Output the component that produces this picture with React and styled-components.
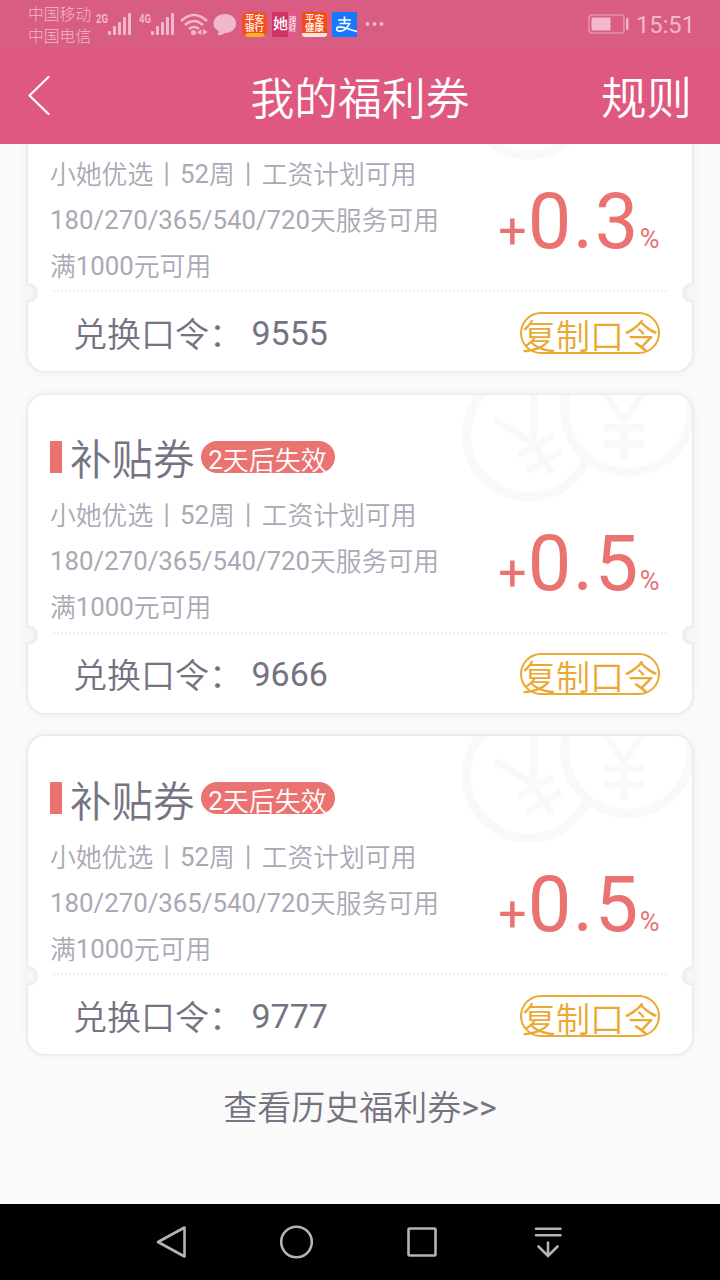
import React from "react";
import styled, { createGlobalStyle } from "styled-components";

const GlobalStyle = createGlobalStyle`
    * {
        box-sizing: border-box;
    }
    body {
        margin: 0;
        background: #fafafa;
        font-family: Roboto, "Noto Sans CJK SC", sans-serif;
        font-weight: 350;
    }
    `;

const Screen = styled.div`
    width: 720px;
    height: 1280px;
    display: flex;
    flex-direction: column;
    overflow: hidden;
    background: #fafafa;
    `;

const StatusBar = styled.div`
    height: 48px;
    flex: none;
    display: flex;
    align-items: center;
    padding: 0 25px 0 28px;
    background: #d95d82;
    color: #f1b8cb;
    `;

const Carriers = styled.div`
    width: 67px;
    padding-top: 3px;
    font-size: 15.8px;
    line-height: 21.5px;
    font-weight: 300;
    white-space: nowrap;
    `;

const StatusIcons = styled.svg`
    display: block;
    flex: none;
    `;

const AppIcons = styled.div`
    display: flex;
    gap: 5px;
    margin-left: 5px;
    `;

const AppIcon = styled.div`
    width: 25px;
    height: 25px;
    display: flex;
    flex-direction: column;
    align-items: center;
    overflow: hidden;
    border-radius: ${(props) => props.$radius || 0}px;
    background: ${(props) => props.$bg};
    color: #fff;
    font-weight: 500;
    font-size: 9.5px;
    line-height: 9px;
    padding-top: 2px;
    white-space: nowrap;
    `;

const IconStrip = styled.div`
    width: ${(props) => props.$width}px;
    height: 4px;
    margin-top: auto;
    border-radius: ${(props) => props.$round || 0};
    background: ${(props) => props.$bg};
    `;

const SheIcon = styled.div`
    width: 25px;
    height: 25px;
    display: flex;
    border-radius: 1px;
    overflow: hidden;
    background: #d03263;
    color: #fff;
    `;

const SheMain = styled.div`
    width: 16px;
    font-size: 15px;
    font-weight: 500;
    line-height: 24px;
    padding-left: 1px;
    `;

const SheSide = styled.div`
    width: 9px;
    padding-top: 5px;
    background: #e25a87;
    font-size: 7.5px;
    line-height: 8px;
    font-weight: 400;
    text-align: center;
    `;

const Clock = styled.div`
    margin-left: 7px;
    font-size: 23.7px;
    line-height: 48px;
    padding-top: 2px;
    font-weight: 400;
    `;

const Spacer = styled.div`
    flex: 1;
    `;

const Header = styled.div`
    height: 96px;
    flex: none;
    display: grid;
    grid-template-columns: 150px 1fr 150px;
    align-items: center;
    background: #df5880;
    color: #fff;
    `;

const Back = styled.svg`
    display: block;
    margin-left: 27px;
    `;

const Title = styled.div`
    font-size: 43.8px;
    line-height: 64px;
    padding-top: 8px;
    text-align: center;
    `;

const Rules = styled.div`
    font-size: 45.5px;
    line-height: 64px;
    padding: 8px 28px 0 0;
    text-align: right;
    `;

const Content = styled.div`
    flex: 1;
    min-height: 0;
    overflow: hidden;
    `;

const List = styled.div`
    margin-top: -91px;
    padding: 0 28px;
    display: flex;
    flex-direction: column;
    gap: 23.5px;
    `;

const Card = styled.div`
    position: relative;
    height: 318px;
    padding: 37px 22px 0;
    border-radius: 17px;
    background: #fff;
    box-shadow: 0 0 3px 1px #e4e4e4, 0 0 9px 1px #f1f1f1;
    `;

const Coins = styled.svg`
    position: absolute;
    top: 0;
    right: 0;
    border-top-right-radius: 17px;
    `;

const Notch = styled.div`
    position: absolute;
    top: 230px;
    ${(props) => props.$side}: -2px;
    width: 12px;
    height: 20px;
    border-radius: ${(props) => (props.$side === "left" ? "0 10px 10px 0" : "10px 0 0 10px")};
    background: radial-gradient(
        circle at ${(props) => (props.$side === "left" ? "1px" : "11px")} 10px,
        #f7f7f7 5px,
        #ececec 10px
    );
    `;

const Heading = styled.div`
    position: relative;
    height: 56px;
    display: flex;
    align-items: center;
    color: #757382;
    visibility: ${(props) => (props.$hidden ? "hidden" : "visible")};
    `;

const Bar = styled.div`
    width: 12px;
    height: 32px;
    margin: 0 8px 6px 0;
    background: #ea7372;
    `;

const Name = styled.div`
    padding-top: 3px;
    font-size: 41.5px;
    line-height: 56px;
    `;

const Expiry = styled.div`
    width: 134px;
    height: 32px;
    margin: 0 0 6px 6px;
    padding-top: 4px;
    border-radius: 16px;
    background: #ea7372;
    color: #fff;
    font-size: 26px;
    line-height: 32px;
    text-align: center;
    white-space: nowrap;
    `;

const Middle = styled.div`
    position: relative;
    display: flex;
    justify-content: space-between;
    height: 144px;
    `;

const Desc = styled.div`
    padding-top: 5.5px;
    color: #aaa8b5;
    font-size: 25.8px;
    line-height: 46px;
    white-space: nowrap;
    `;

const Num = styled.span`
    font-weight: 400;
    line-height: 1;
    vertical-align: 1px;
    `;

const Sep = styled.span`
    margin: 0 0.5px;
    `;

const Rate = styled.div`
    display: flex;
    align-items: baseline;
    padding: 30px 10.5px 0 0;
    color: #ea7372;
    font-weight: 400;
    line-height: 92px;
    `;

const Plus = styled.span`
    font-size: 50px;
    `;

const Amount = styled.span`
    margin-left: 1px;
    font-size: 77.5px;
    letter-spacing: 1.5px;
    `;

const Percent = styled.span`
    font-size: 27px;
    `;

const Divider = styled.div`
    height: 2px;
    margin: 0 3px;
    background: repeating-linear-gradient(90deg, #eeeeee 0 2px, #fff 2px 4px);
    `;

const CodeRow = styled.div`
    display: flex;
    align-items: flex-start;
    justify-content: space-between;
    padding: 19.5px 10px 0 23px;
    color: #757382;
    font-size: 34px;
    line-height: 42px;
    `;

const Label = styled.div`
    padding-top: 2px;
    `;

const Code = styled.span`
    font-weight: 400;
    line-height: 1;
    vertical-align: 2px;
    white-space: pre;
    `;

const CopyButton = styled.button`
    width: 140px;
    height: 42px;
    padding: 8px 0 0;
    display: flex;
    align-items: center;
    justify-content: center;
    border: 2px solid #eba833;
    border-radius: 21px;
    background: transparent;
    color: #eba833;
    font: inherit;
    line-height: 42px;
    white-space: nowrap;
    `;

const History = styled.div`
    padding-top: 29.5px;
    color: #757382;
    font-size: 34px;
    line-height: 48px;
    text-align: center;
    `;

const NavBar = styled.div`
    height: 76px;
    flex: none;
    display: flex;
    align-items: center;
    justify-content: space-between;
    padding: 0 154px 0 152px;
    background: #000;
    `;

const coupons = [
    { rate: "0.3", code: "9555", scrolled: true },
    { rate: "0.5", code: "9666" },
    { rate: "0.5", code: "9777" },
];

const Coupon = ({ rate, code, scrolled }) => {
    return (
        <Card>
            <Coins width="232" height="110" viewBox="0 0 232 110" fill="none" stroke="#f9f9f9" strokeWidth="9">
                <circle cx="69" cy="39.5" r="62.5" />
                <path d="M35 25L73 48L74 -4M73 48L92 78M58 60.500L93 41M67 76L101 56" strokeWidth="7" />
                <circle cx="168" cy="14" r="63.500" fill="#fff" />
                <path d="M144 -5L164 27L184 -5M164 22V64M144 32.500H184M144 49H184" strokeWidth="7" />
            </Coins>
            <Notch $side="left" />
            <Notch $side="right" />
            <Heading $hidden={scrolled}>
                <Bar />
                <Name>补贴券</Name>
                <Expiry>
                    <Num>2</Num>天后失效
                </Expiry>
            </Heading>
            <Middle>
                <Desc>
                    <div>
                        小她优选<Sep>丨</Sep><Num>52</Num>周<Sep>丨</Sep>工资计划可用
                    </div>
                    <div>
                        <Num>180/270/365/540/720</Num>天服务可用
                    </div>
                    <div>
                        满<Num>1000</Num>元可用
                    </div>
                </Desc>
                <Rate>
                    <Plus>+</Plus>
                    <Amount>{rate}</Amount>
                    <Percent>%</Percent>
                </Rate>
            </Middle>
            <Divider />
            <CodeRow>
                <Label>
                    兑换口令：<Code> {code}</Code>
                </Label>
                <CopyButton>复制口令</CopyButton>
            </CodeRow>
        </Card>
    );
};

const Signal = ({ x, label }) => {
    return (
        <g transform={`translate(${x} 0)`}>
            <text x="0" y="23" fontSize="13" fontWeight="700" textLength="12" lengthAdjust="spacingAndGlyphs">
                {label}
            </text>
            <rect x="12" y="31" width="3" height="4" rx="1" />
            <rect x="17" y="26" width="3" height="9" rx="1" />
            <rect x="22" y="22" width="3" height="13" rx="1" />
            <rect x="27" y="17" width="3" height="18" rx="1" />
            <rect x="32" y="13" width="3" height="22" rx="1" />
        </g>
    );
};

const App = () => {
    return (
        <Screen>
            <GlobalStyle />
            <StatusBar>
                <Carriers>
                    <div>中国移动</div>
                    <div>中国电信</div>
                </Carriers>
                <StatusIcons width="142" height="48" viewBox="95 0 142 48" fill="#f1b8cb">
                    <Signal x={96} label="2G" />
                    <Signal x={139} label="4G" />
                    <g fill="none" stroke="#f1b8cb" strokeWidth="2.6">
                        <path d="M181 21Q194 9 207 21" />
                        <path d="M185 25Q194 17 203 25" />
                        <path d="M189 29Q194 25 199 29" />
                    </g>
                    <circle cx="193.5" cy="32.5" r="2.5" />
                    <path d="M197 32.500L201.500 29V35ZM203 29V35L207.500 32Z" />
                    <path d="M225 14C231.500 14 236 18 236 23.500S231.500 33 225 33C223.500 34.500 220 35.500 217 35C218.500 34 219 32.500 218.500 31C215.500 29.500 213.500 27 213.500 23.500C213.500 18 218.500 14 225 14Z" />
                </StatusIcons>
                <AppIcons>
                    <AppIcon $bg="#f3501b" $radius={6}>
                        <div>平安</div>
                        <div>银行</div>
                        <IconStrip $width={20} $bg="#fbb321" $round="10px 10px 0 0" />
                    </AppIcon>
                    <SheIcon>
                        <SheMain>她</SheMain>
                        <SheSide>
                            <div>理</div>
                            <div>财</div>
                        </SheSide>
                    </SheIcon>
                    <AppIcon $bg="#f64c14" $radius={3}>
                        <div>平安</div>
                        <div>健康</div>
                        <IconStrip $width={25} $bg="#fde5dc" />
                    </AppIcon>
                    <StatusIcons width="25" height="25" viewBox="0 0 25 25" fill="none" stroke="#fff">
                        <rect width="25" height="25" fill="#1677ff" stroke="none" />
                        <path d="M6 8H19M12.500 4.500V12M7.500 11.500H17.500C15.500 16.500 11 19.500 7.500 19.200C3.500 18.700 4 14.800 7.500 14.800C12 14.800 17 17.500 25 19.500" strokeWidth="1.7" />
                    </StatusIcons>
                </AppIcons>
                <StatusIcons width="28" height="48" viewBox="357 0 28 48" fill="#f1b8cb">
                    <circle cx="367.5" cy="24" r="1.9" />
                    <circle cx="374.500" cy="24" r="1.9" />
                    <circle cx="381.500" cy="24" r="1.9" />
                </StatusIcons>
                <Spacer />
                <StatusIcons width="42" height="20" viewBox="0 0 42 20" fill="#f1b8cb">
                    <rect x="2" y="1" width="35" height="18" rx="3" fill="none" stroke="#e88fab" strokeWidth="1.6" />
                    <rect x="4.500" y="3.500" width="19" height="13" />
                    <rect x="39" y="4" width="2.500" height="12" rx="1" />
                </StatusIcons>
                <Clock>15:51</Clock>
            </StatusBar>
            <Header>
                <Back width="24" height="44" viewBox="0 0 24 44" fill="none" stroke="#fff" strokeWidth="2.2">
                    <path d="M21.500 3L2.500 21.500L21.500 40" strokeLinecap="round" strokeLinejoin="round" />
                </Back>
                <Title>我的福利券</Title>
                <Rules>规则</Rules>
            </Header>
            <Content>
                <List>
                    {coupons.map((coupon) => (
                        <Coupon key={coupon.code} {...coupon} />
                    ))}
                </List>
                <History>
                    查看历史福利券<Num>&gt;&gt;</Num>
                </History>
            </Content>
            <NavBar>
                <svg width="36" height="36" viewBox="0 0 36 36" fill="none" stroke="#b4b4b4" strokeWidth="2.600">
                    <path d="M32.500 3.500V32.500L6 18Z" strokeLinejoin="round" />
                </svg>
                <svg width="36" height="36" viewBox="0 0 36 36" fill="none" stroke="#b4b4b4" strokeWidth="2.600">
                    <circle cx="18.500" cy="18" r="15.300" />
                </svg>
                <svg width="36" height="36" viewBox="0 0 36 36" fill="none" stroke="#b4b4b4" strokeWidth="2.600">
                    <rect x="4.500" y="4.500" width="27" height="27" rx="1" />
                </svg>
                <svg width="36" height="36" viewBox="0 0 36 36" fill="none" stroke="#b4b4b4" strokeWidth="2.600">
                    <path d="M6 4.700H30.500M6 11.300H30.500M18 18.500V31M8.500 22.500L18 32L27.500 22.500" strokeLinecap="round" />
                </svg>
            </NavBar>
        </Screen>
    );
};

export default App;
